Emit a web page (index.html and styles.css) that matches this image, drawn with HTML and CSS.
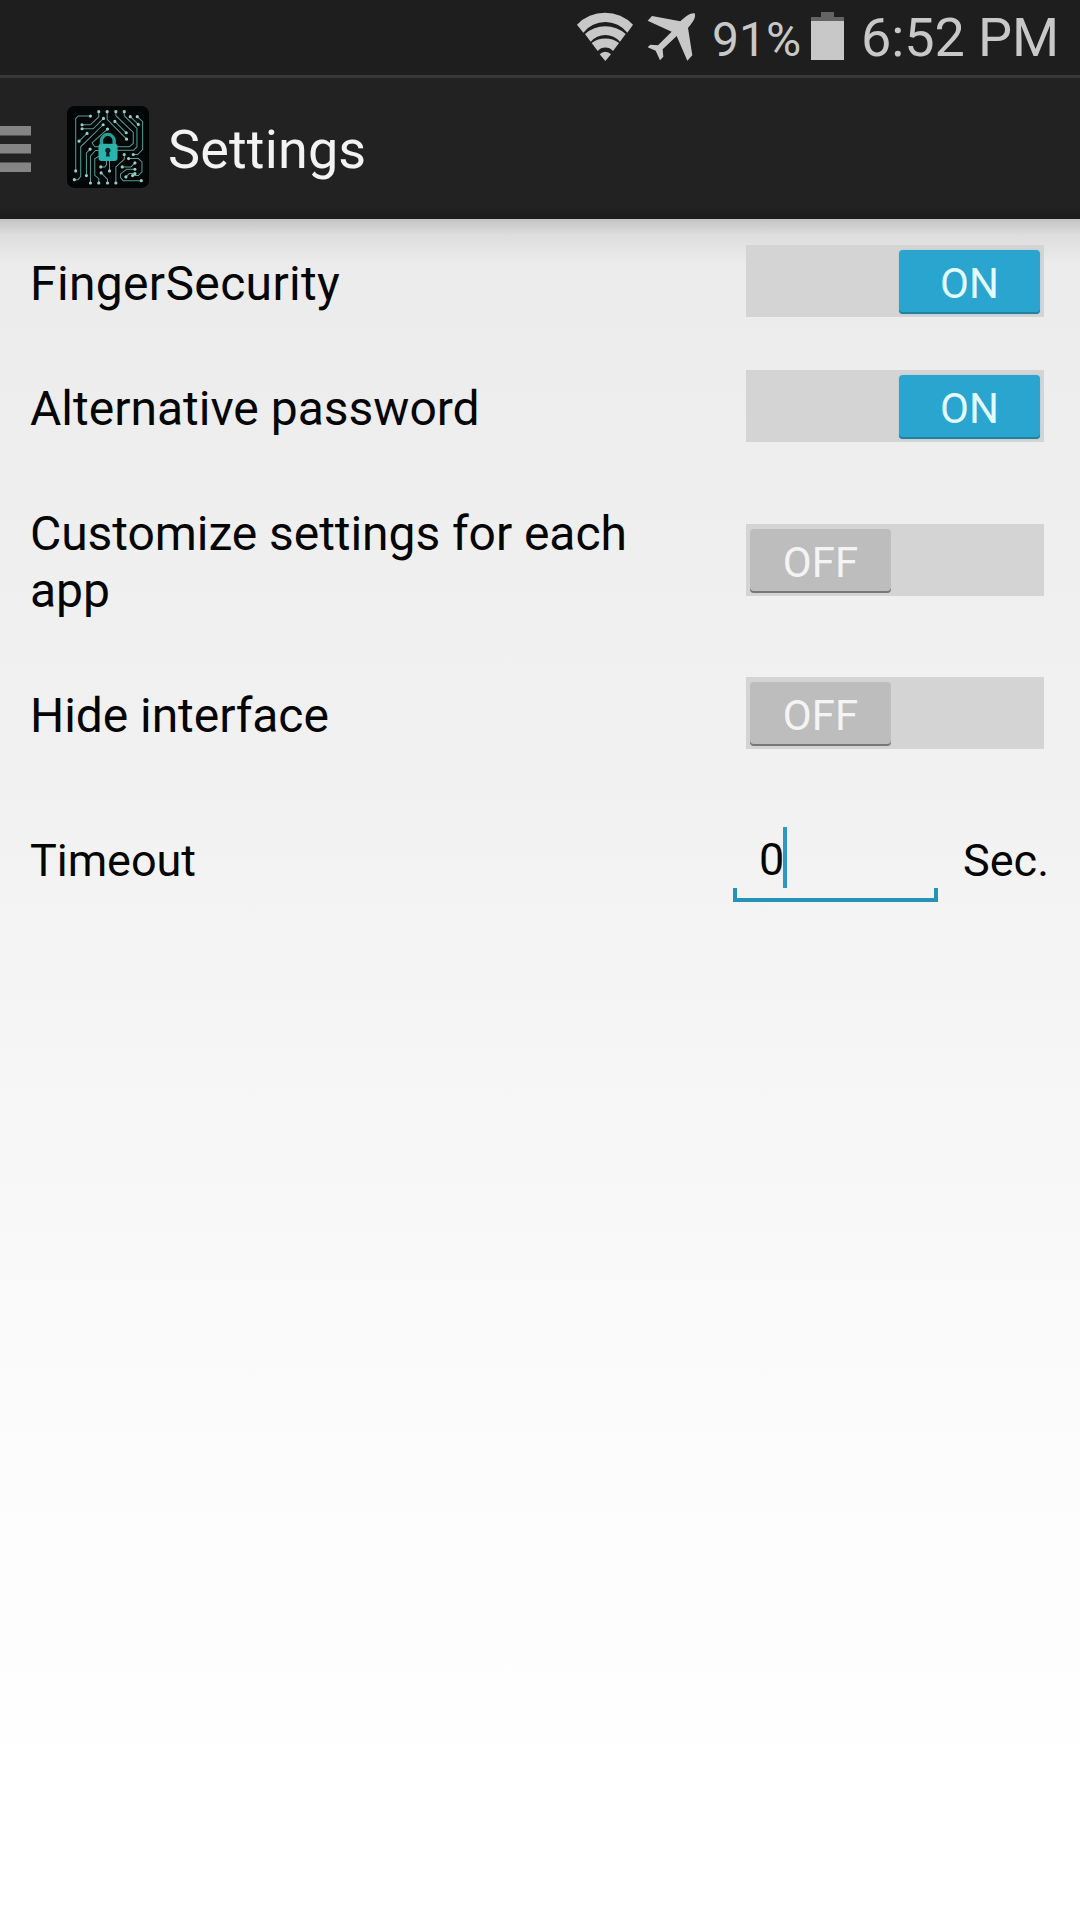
FILE: index.html
```html
<!DOCTYPE html>
<html lang="en">
<head>
<meta charset="utf-8">
<title>Settings</title>
<link rel="stylesheet" href="styles.css">
</head>
<body>
<div class="status-bar">
  <svg class="icon-wifi" viewBox="51 36 171 150">
    <path d="M51 74A116 116 0 0 1 219 74L202 98A84 84 0 0 0 70 98Z"/>
    <path d="M75 102A92 92 0 0 1 197 102L180 125A58 58 0 0 0 92 125Z"/>
    <path d="M95 129A70 70 0 0 1 177 129L159 153A31 31 0 0 0 113 153Z"/>
    <path d="M119 163A22 22 0 0 1 153 163L136 183Z"/>
  </svg>
  <svg class="icon-plane" viewBox="261 36 147 150">
    <path d="M404 40C395 37 376 48 361 64L276 48L263 62L335 95L294 136L271 134L263 142L287 152L300 181L310 170L308 148L350 108L382 182L397 166L384 84C397 68 409 54 404 40Z"/>
  </svg>
  <span class="battery-level">91%</span>
  <svg class="icon-battery" viewBox="0 0 33 48">
    <path class="battery-empty" d="M10 0H23V5H33V9H0V5H10Z"/>
    <path d="M0 9H33V48H0Z"/>
  </svg>
  <span class="clock">6:52 PM</span>
</div>
<header class="action-bar">
  <svg class="icon-menu" viewBox="0 0 31 46"><path d="M0 0H31V9.500H0ZM0 18H31V27.500H0ZM0 36.500H31V46H0Z"/></svg>
  <svg class="app-icon" viewBox="202 108 245 245">
    <rect x="202" y="108" width="245" height="245" rx="22" fill="#020606"/>
    <g class="traces">
      <path d="M272 138H235L228 146V302"/>
      <path d="M247 164H272L297 140V125"/>
      <path d="M247 176H280L311 145"/>
      <path d="M262 190L238 213"/>
      <path d="M310 164L243 230V318L235 328H224"/>
      <path d="M323 177L277 218L285 230H350"/>
      <path d="M271 237L260 248V316"/>
      <path d="M322 125V148L380 207"/>
      <path d="M348 125V137L400 187V220L388 230H350"/>
      <path d="M345 154L379 188"/>
      <path d="M373 125V137L411 175V230L401 240H350"/>
      <path d="M391 140L415 163"/>
      <path d="M412 140L428 155V238L413 253H400"/>
      <path d="M297 241H287L272 258V338"/>
      <path d="M297 258L285 266V315L297 325V338"/>
      <path d="M303 290H315L320 283V270"/>
      <path d="M329 302V270"/>
      <path d="M304 308L323 327V338"/>
      <path d="M348 338V290L373 267V253"/>
      <path d="M386 265H415L426 275V305L415 316H398"/>
      <path d="M405 278L393 290H367"/>
      <path d="M405 297H380L362 311V322L370 331H424"/>
      <path d="M405 310H388L378 320"/>
    </g>
    <path class="pads" d="M272 138h0M228 302h0M247 164h0M297 125h0M247 176h0M311 145h0M262 190h0M238 213h0M310 164h0M224 328h0M323 177h0M271 237h0M260 316h0M322 125h0M380 207h0M348 125h0M345 154h0M379 188h0M373 125h0M391 140h0M415 163h0M412 140h0M400 253h0M272 338h0M297 338h0M303 290h0M329 302h0M304 308h0M323 338h0M348 338h0M373 253h0M386 265h0M398 316h0M405 278h0M367 290h0M405 297h0M424 331h0M405 310h0M378 320h0"/>
    <path class="shackle" d="M305 224V212A19 19 0 0 1 343 212V224"/>
    <rect x="296" y="221" width="57" height="51" rx="9" fill="#2bb3ad"/>
    <path d="M324 233a8 8 0 0 1 4 15l2 11h-12l2-11a8 8 0 0 1 4-15Z" fill="#032222"/>
  </svg>
  <h1 class="title">Settings</h1>
</header>
<main class="settings">
  <div class="row">
    <span class="label label-wide">FingerSecurity</span>
    <div class="switch switch-on"><span class="thumb">ON</span></div>
  </div>
  <div class="row">
    <span class="label">Alternative password</span>
    <div class="switch switch-on"><span class="thumb">ON</span></div>
  </div>
  <div class="row row-tall">
    <span class="label label-tight">Customize settings for each app</span>
    <div class="switch"><span class="thumb">OFF</span></div>
  </div>
  <div class="row">
    <span class="label label-tight">Hide interface</span>
    <div class="switch"><span class="thumb">OFF</span></div>
  </div>
  <div class="row row-timeout">
    <span class="label label-small label-tight">Timeout</span>
    <div class="field"><span class="value">0</span><span class="caret"></span></div>
    <span class="unit">Sec.</span>
  </div>
</main>
</body>
</html>
```

FILE: styles.css
```css
* { box-sizing: border-box; }

body {
  margin: 0;
  width: 1080px;
  height: 1920px;
  overflow: hidden;
  display: flex;
  flex-direction: column;
  font-family: Roboto, sans-serif;
  color: #050505;
  background: #fff;
}

svg { display: block; flex: none; }

.status-bar {
  height: 78px;
  flex: none;
  display: flex;
  justify-content: flex-end;
  align-items: flex-start;
  padding: 12px 22px 0 0;
  background: #1e1e1e;
  border-bottom: 3px solid #383838;
  color: #c8c8c8;
  fill: #c8c8c8;
  white-space: nowrap;
}
.icon-wifi { width: 57px; height: 50px; margin-right: 13px; }
.icon-plane { width: 49px; height: 50px; margin-right: 16px; }
.battery-level {
  width: 88px;
  margin-right: 11px;
  font-size: 48px;
  line-height: 56px;
}
.icon-battery { width: 33px; height: 48px; margin-right: 12px; }
.battery-empty { fill: #646464; }
.clock {
  width: 202px;
  padding-left: 5px;
  font-size: 54px;
  line-height: 51px;
  letter-spacing: -0.1px;
}

.action-bar {
  height: 141px;
  flex: none;
  display: flex;
  align-items: center;
  background: linear-gradient(#222 90%, #1c1c1c);
}
.icon-menu { width: 31px; height: 46px; margin-right: 36px; fill: #858585; }
.app-icon { width: 82px; height: 82px; margin: -3px 19px 0 0; }
.traces { fill: none; stroke: #5a9c92; stroke-width: 3; }
.pads { fill: none; stroke: #96cfc3; stroke-width: 9.5; stroke-linecap: round; }
.shackle { fill: none; stroke: #24a09a; stroke-width: 10; }
.title {
  margin: 2px 0 0;
  font-size: 54px;
  line-height: 64px;
  font-weight: 400;
  letter-spacing: 0.15px;
  color: #f3f3f3;
}

.settings {
  flex: 1;
  background:
    linear-gradient(rgba(0,0,0,.17), rgba(0,0,0,.06) 16px, rgba(0,0,0,0) 44px),
    linear-gradient(#ebebeb, #eee 250px, #f2f2f2 620px, #fbfbfb 1180px, #fff 1600px);
}
.row {
  height: 125px;
  display: flex;
  align-items: center;
  padding: 0 36px 0 30px;
}
.row-tall { height: 182px; }
.label {
  width: 630px;
  margin-right: auto;
  padding-top: 4px;
  font-size: 48px;
  line-height: 57px;
}
.label-wide { letter-spacing: 0.35px; }
.label-tight { letter-spacing: -0.06px; }
.label-small, .unit { font-size: 45px; }

.switch {
  width: 298px;
  height: 72px;
  flex: none;
  display: flex;
  margin-bottom: 1px;
  padding: 5px 4px 3px;
  background: #d4d4d4;
}
.switch-on { justify-content: flex-end; }
.thumb {
  width: 141px;
  height: 64px;
  border-radius: 4px;
  text-align: center;
  font-size: 42px;
  line-height: 67px;
  color: #f4f4f4;
  background: #bdbdbd;
  box-shadow: inset 0 -2px #777;
}
.switch-on .thumb {
  color: #e2fbff;
  background: #29a5d0;
  box-shadow: inset 0 -2px #2580a0, 0 0 2px #9ccbd9;
}

.row-timeout { height: 172px; padding: 0 0 0 30px; }
.row-timeout .label { padding: 0 0 4px; }
.field {
  width: 205px;
  height: 75px;
  flex: none;
  display: flex;
  align-items: flex-start;
  margin-top: 5px;
  padding-left: 26px;
  font-size: 45px;
  background:
    linear-gradient(#2593b5, #2593b5) 0 100% / 100% 4px no-repeat,
    linear-gradient(#2593b5, #2593b5) 0 100% / 4px 14px no-repeat,
    linear-gradient(#2593b5, #2593b5) 100% 100% / 4px 14px no-repeat;
}
.value { width: 24px; line-height: 65px; }
.caret { width: 4px; height: 61px; background: #3096c5; }
.unit { width: 117px; margin-left: 25px; padding-bottom: 4px; line-height: 57px; }
```
